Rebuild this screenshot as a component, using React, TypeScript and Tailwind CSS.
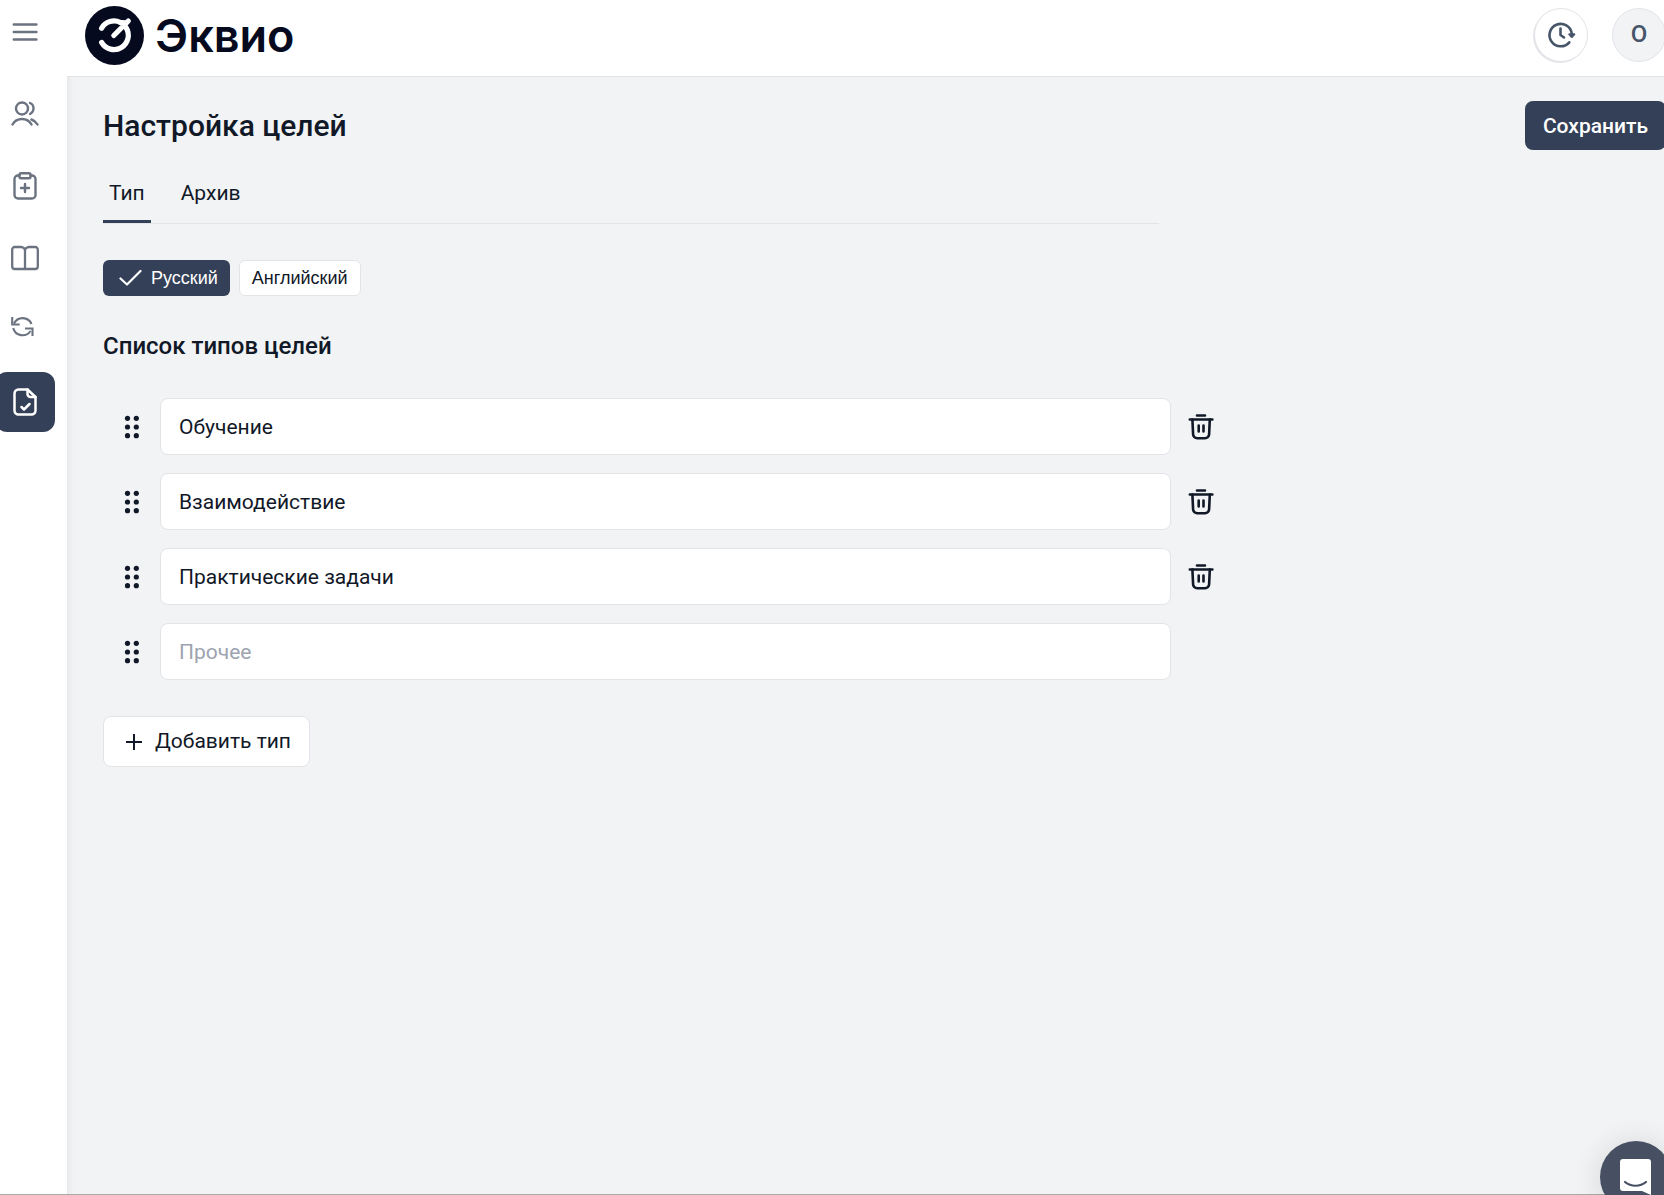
import { useState } from 'react'

interface GoalType {
  id: number
  name: string
  locked?: boolean
}

const INITIAL_TYPES: GoalType[] = [
  { id: 1, name: 'Обучение' },
  { id: 2, name: 'Взаимодействие' },
  { id: 3, name: 'Практические задачи' },
  { id: 4, name: '', locked: true },
]

const NAV = [
  { label: 'Пользователи', icon: <UsersIcon /> },
  { label: 'Назначения', icon: <ClipboardIcon /> },
  { label: 'Материалы', icon: <BookIcon /> },
  { label: 'Обновления', icon: <RefreshIcon /> },
  { label: 'Цели', icon: <FileCheckIcon />, active: true },
]

function MenuIcon() {
  return (
    <svg width="28" height="28" viewBox="0 0 28 28" fill="none" stroke="currentColor" strokeWidth="2.5" strokeLinecap="round">
      <path d="M2.8 6.5h22.6M2.8 14h22.6M2.8 21.5h22.6" />
    </svg>
  )
}

function UsersIcon() {
  return (
    <svg width="28" height="28" viewBox="0 0 28 28" fill="none" stroke="currentColor" strokeWidth="2.4" strokeLinecap="round">
      <circle cx="11" cy="8.5" r="6" />
      <path d="M1.5 24.5c2-3.6 5.5-5.5 9.5-5.5s7.5 1.9 9.5 5.5" />
      <path d="M19 3c2.3.9 3.5 3 3.5 5.3S21.3 12.9 19 14" />
      <path d="M20.5 19.5c2.5.9 4.5 2.5 6 5" />
    </svg>
  )
}

function ClipboardIcon() {
  return (
    <svg width="28" height="28" viewBox="0 0 28 28" fill="none" stroke="currentColor" strokeWidth="2.4" strokeLinecap="round" strokeLinejoin="round">
      <path d="M8.5 3.5H7A3.5 3.5 0 0 0 3.5 7v16A3.5 3.5 0 0 0 7 26.5h14a3.5 3.5 0 0 0 3.5-3.5V7A3.5 3.5 0 0 0 21 3.5h-1.5" />
      <rect x="8.5" y="1.2" width="11" height="5" rx="1.5" />
      <path d="M14 12v8M10 16h8" />
    </svg>
  )
}

function BookIcon() {
  return (
    <svg width="28" height="28" viewBox="0 0 28 28" fill="none" stroke="currentColor" strokeWidth="2.3" strokeLinejoin="round">
      <path d="M14 7a4 4 0 0 0-4-4H3.7A2.5 2.5 0 0 0 1.2 5.5v17A2.5 2.5 0 0 0 3.7 25h20.6a2.5 2.5 0 0 0 2.5-2.5v-17A2.5 2.5 0 0 0 24.3 3H18a4 4 0 0 0-4 4zM14 7v18" />
    </svg>
  )
}

function RefreshIcon() {
  return (
    <svg width="28" height="28" viewBox="0 3 28 28" fill="none" stroke="currentColor" strokeWidth="2.1">
      <path d="M20.5 11A9.6 9.6 0 0 0 3 10.5" />
      <path d="M1.2 4v7.5h7.5" />
      <path d="M2.2 15A9.6 9.6 0 0 0 19.5 18" />
      <path d="M14 15.5h7.5V23" />
    </svg>
  )
}

function FileCheckIcon() {
  return (
    <svg width="28" height="28" viewBox="0 0 28 28" fill="none" stroke="currentColor" strokeWidth="2.5" strokeLinecap="round" strokeLinejoin="round">
      <path d="M16.5 1.5h-9a4 4 0 0 0-4 4v17a4 4 0 0 0 4 4h13a4 4 0 0 0 4-4V9z" />
      <path d="M16.5 1.5v4.5a3 3 0 0 0 3 3h5" />
      <path d="M10.5 19l2.5 2.5 5.5-5.5" />
    </svg>
  )
}

function Logo() {
  return (
    <svg width="59" height="59" viewBox="0 0 59 59" aria-hidden="true">
      <circle cx="29.5" cy="29.5" r="29.5" fill="#050a1e" />
      <g fill="none" stroke="#fff" strokeWidth="5.2" strokeLinecap="round" strokeLinejoin="round">
        <path d="M16.6 22.2A14.3 14.3 0 0 1 35.5 16.5" />
        <path d="M41 21.5A14.3 14.3 0 1 1 16.6 36.4" />
        <path d="M28.8 29.5L43.3 15M35.5 16.5l6 .3" />
      </g>
    </svg>
  )
}

function HistoryIcon() {
  return (
    <svg width="30" height="30" viewBox="0 0 30 30" fill="none" stroke="currentColor" strokeWidth="2.6" strokeLinecap="round" strokeLinejoin="round">
      <path d="M23.3 22.3A11.2 11.2 0 1 1 25.8 13.5" />
      <path d="M14.5 8.5V15l3.5 2.5" />
      <path d="M23.3 14.3h5L25.8 17z" fill="currentColor" strokeWidth="2" />
    </svg>
  )
}

function DragDots() {
  return (
    <svg width="16" height="24" viewBox="0 0 16 24" fill="currentColor">
      <circle cx="3.5" cy="3.3" r="2.6" />
      <circle cx="12.3" cy="3.3" r="2.6" />
      <circle cx="3.5" cy="12" r="2.6" />
      <circle cx="12.3" cy="12" r="2.6" />
      <circle cx="3.5" cy="20.7" r="2.6" />
      <circle cx="12.3" cy="20.7" r="2.6" />
    </svg>
  )
}

function TrashIcon() {
  return (
    <svg width="26" height="28" viewBox="0 0 26 28" fill="none" stroke="currentColor" strokeWidth="2.6" strokeLinecap="round" strokeLinejoin="round">
      <path d="M9 2.5h8M1.8 6.5h22.6" />
      <path d="M4.4 6.5l.7 15a4 4 0 0 0 4 3.7h8a4 4 0 0 0 4-3.7l.7-15" />
      <path d="M10.7 12.5v6M15.5 12.5v6" />
    </svg>
  )
}

export default function App() {
  const [types, setTypes] = useState(INITIAL_TYPES)
  const [tab, setTab] = useState('Тип')

  const rename = (id: number, name: string) =>
    setTypes(types.map(t => (t.id === id ? { ...t, name } : t)))

  return (
    <div className="flex min-h-screen flex-col overflow-hidden border-b border-[#a9a9a9] bg-[#f1f3f5] font-['Roboto','Liberation_Sans',sans-serif] text-[#111827]">
      <div className="flex grow">
        <aside className="z-10 flex w-[67px] shrink-0 flex-col bg-white pt-[18px] text-[#6b7280] shadow-[2px_6px_6px_rgba(0,0,0,0.06)]">
          <button aria-label="Меню" className="ml-[11px] h-7 w-7">
            <MenuIcon />
          </button>
          <nav className="mt-[38px] -ml-[5px] flex flex-col gap-3">
            {NAV.map(item => (
              <a
                key={item.label}
                href="#"
                aria-label={item.label}
                className={
                  item.active
                    ? 'flex h-[60px] w-[60px] items-center justify-center rounded-xl bg-[#334057] text-white'
                    : 'flex h-[60px] w-[60px] items-center justify-center'
                }
              >
                {item.icon}
              </a>
            ))}
          </nav>
        </aside>

        <div className="flex min-w-0 grow flex-col">
          <header className="relative z-20 -mr-[2px] flex h-[77px] items-center justify-between border-b border-[#e2e4e8] bg-white pb-[6px] pl-[18px]">
            <a href="#" className="flex items-center gap-[11px]">
              <Logo />
              <span className="pt-[2px] font-['Inter',sans-serif] text-[45px] leading-[56px] font-semibold text-[#050a1e]">Эквио</span>
            </a>
            <div className="flex items-center gap-6">
              <button aria-label="История" className="flex h-[54px] w-[54px] items-center justify-center rounded-full border border-[#e2e4e8] bg-white text-[#475569] shadow-[-1px_1px_0_#e2e4e8]">
                <HistoryIcon />
              </button>
              <button className="h-[54px] w-[54px] rounded-full border border-[#e2e4e8] bg-[#f1f3f5] pb-[2px] text-2xl font-medium text-[#475569]">O</button>
            </div>
          </header>

          <main className="px-9 pt-6">
            <div className="-mr-[38px] flex items-center justify-between">
              <h1 className="text-[30px] leading-[48px] font-medium">Настройка целей</h1>
              <button className="h-[49px] rounded-lg bg-[#334057] px-[18px] pt-[2px] text-[21px] font-medium text-white">Сохранить</button>
            </div>

            <div role="tablist" className="mt-[17px] flex max-w-[1056px] gap-6 border-b border-[#e2e4e8]">
              {['Тип', 'Архив'].map(name => (
                <button
                  key={name}
                  role="tab"
                  aria-selected={tab === name}
                  onClick={() => setTab(name)}
                  className={
                    tab === name
                      ? 'h-14 border-b-3 border-[#334057] px-[6px] text-[21px]'
                      : 'h-14 border-b-3 border-transparent px-[6px] text-[21px]'
                  }
                >
                  {name}
                </button>
              ))}
            </div>

            <div className="mt-9 flex gap-[9px] font-['Liberation_Sans',sans-serif] text-lg">
              <button className="flex h-9 items-center gap-2 rounded-md bg-[#334057] pr-3 pl-4 text-white">
                <svg width="24" height="20" viewBox="0 0 24 20" fill="none" stroke="currentColor" strokeWidth="2.2" strokeLinecap="round" strokeLinejoin="round">
                  <path d="M1.5 10.5l6.5 6L21.5 3" />
                </svg>
                Русский
              </button>
              <button className="h-9 rounded-md border border-[#e2e4e8] bg-white px-3">Английский</button>
            </div>

            <h2 className="mt-[34px] text-2xl leading-8 font-medium">Список типов целей</h2>

            <ul className="mt-9 flex max-w-[1111px] flex-col gap-[18px]">
              {types.map(type => (
                <li key={type.id} className="flex items-center">
                  <button aria-label="Переместить" className="ml-[21px] w-4 shrink-0">
                    <DragDots />
                  </button>
                  <input
                    aria-label="Название типа"
                    value={type.name}
                    placeholder="Прочее"
                    readOnly={type.locked}
                    onChange={e => rename(type.id, e.target.value)}
                    className="ml-5 h-[57px] min-w-0 grow rounded-lg border border-[#e2e4e8] bg-white px-[18px] text-[21px] placeholder:text-[#9ca3af]"
                  />
                  <div className="ml-[17px] h-7 w-[26px] shrink-0">
                    {!type.locked && (
                      <button aria-label="Удалить" onClick={() => setTypes(types.filter(t => t.id !== type.id))}>
                        <TrashIcon />
                      </button>
                    )}
                  </div>
                </li>
              ))}
            </ul>

            <button
              onClick={() => setTypes([...types, { id: Date.now(), name: '' }])}
              className="mt-9 flex h-[51px] items-center gap-[9px] rounded-lg border border-[#e2e4e8] bg-white px-[18px] text-[21px]"
            >
              <svg width="24" height="24" viewBox="0 0 24 24" fill="none" stroke="currentColor" strokeWidth="2">
                <path d="M12 4v16M4 12h16" />
              </svg>
              Добавить тип
            </button>
          </main>
        </div>
      </div>

      <button aria-label="Чат" className="fixed -right-2 -bottom-[18px] flex h-[72px] w-[72px] items-center justify-center rounded-full bg-[#475063] text-[#475063] shadow-[0_2px_24px_6px_rgba(0,0,0,0.08)]">
        <svg width="34" height="38" viewBox="0 0 34 38">
          <path d="M4 1h25a3 3 0 0 1 3 3v33l-9-4H4a3 3 0 0 1-3-3V4a3 3 0 0 1 3-3z" fill="#fff" />
          <path d="M6 24c6 5 15 5 21 0" fill="none" stroke="currentColor" strokeWidth="2.2" strokeLinecap="round" />
        </svg>
      </button>
    </div>
  )
}
